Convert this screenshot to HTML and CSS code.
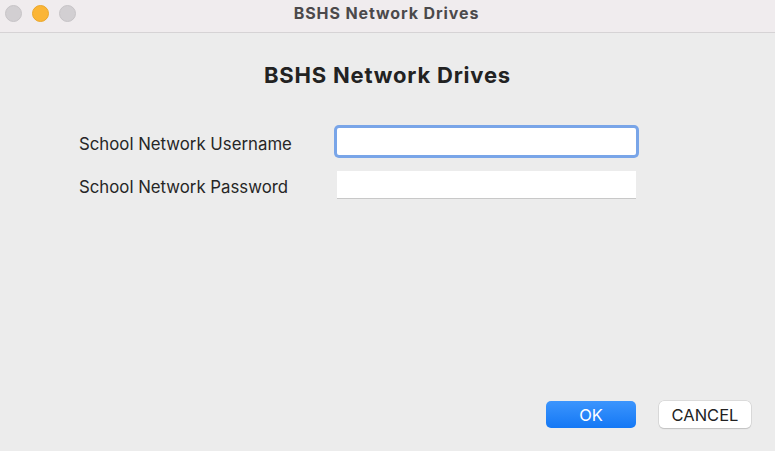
FILE: index.html
```html
<!DOCTYPE html>
<html>
<head>
<meta charset="utf-8">
<link rel="stylesheet" href="styles.css">
</head>
<body>
<div class="window">
  <div class="titlebar">
    <div class="lights">
      <span class="light gray"></span>
      <span class="light yellow"></span>
      <span class="light gray"></span>
    </div>
    <div class="title">BSHS Network Drives</div>
  </div>
  <div class="content">
    <h1 class="heading">BSHS Network Drives</h1>
    <div class="form">
      <div class="row">
        <label class="label">School Network Username</label>
        <div class="field focused"><input class="input" type="text"></div>
      </div>
      <div class="row">
        <label class="label">School Network Password</label>
        <div class="field"><input class="input" type="password"></div>
      </div>
    </div>
    <div class="spacer"></div>
    <div class="buttons">
      <button class="btn ok">OK</button>
      <button class="btn cancel">CANCEL</button>
    </div>
  </div>
</div>
</body>
</html>
```

FILE: styles.css
```css
* { box-sizing: border-box; }
html, body { margin: 0; padding: 0; }
body {
  width: 775px;
  height: 451px;
  overflow: hidden;
  background: #ececec;
  font-family: "Inter", "Liberation Sans", sans-serif;
}
.window {
  display: flex;
  flex-direction: column;
  height: 451px;
}
.titlebar {
  position: relative;
  height: 33px;
  background: #f0ecee;
  border-bottom: 1px solid #d6d3d5;
  display: flex;
  align-items: center;
  justify-content: center;
  flex-shrink: 0;
}
.lights {
  position: absolute;
  left: 5px;
  top: 5px;
  display: flex;
  gap: 10px;
}
.light {
  width: 17px;
  height: 17px;
  border-radius: 50%;
  display: block;
}
.light.gray { background: #d2cfd2; border: 1px solid #c7c4c7; }
.light.yellow { background: #fbb535; border: 1px solid #eaa72c; }
.title {
  font-size: 16px;
  letter-spacing: 0.9px;
  font-weight: 700;
  color: #4b494b;
  margin-top: -6px;
  margin-left: -2px;
}
.content {
  flex: 1;
  display: flex;
  flex-direction: column;
}
.heading {
  margin: 28px 0 0;
  text-align: center;
  font-size: 22px;
  letter-spacing: 0.8px;
  font-weight: 700;
  color: #222;
  line-height: 28px;
}
.form {
  margin-top: 37px;
  padding-left: 79px;
  display: flex;
  flex-direction: column;
  gap: 13px;
}
.row {
  display: flex;
  align-items: center;
  height: 30px;
}
.label {
  width: 258px;
  font-size: 16.8px;
  color: #262626;
  padding-top: 5px;
}
.field {
  width: 299px;
  height: 27px;
  background: #fff;
  box-shadow: 0 1px 0 #c8c8c8;
}
.field.focused {
  box-shadow: 0 0 0 3px #79a5e8;
  border-radius: 2px;
}
.input {
  border: none;
  outline: none;
  background: transparent;
  width: 100%;
  height: 100%;
}
.spacer { flex: 1; }
.buttons {
  display: flex;
  justify-content: flex-end;
  gap: 23px;
  padding-right: 24px;
  padding-bottom: 23px;
}
.btn {
  height: 27px;
  border-radius: 5px;
  font-family: "Inter", "Liberation Sans", sans-serif;
  font-size: 16.5px;
  border: none;
  padding: 0;
}
.ok {
  width: 90px;
  background: linear-gradient(#3c95fd, #1478f5);
  color: #fff;
}
.cancel {
  width: 92px;
  background: #fff;
  color: #222;
  box-shadow: 0 0 0 0.5px #c9c9c9, 0 1px 1px rgba(0,0,0,0.2);
}
```
